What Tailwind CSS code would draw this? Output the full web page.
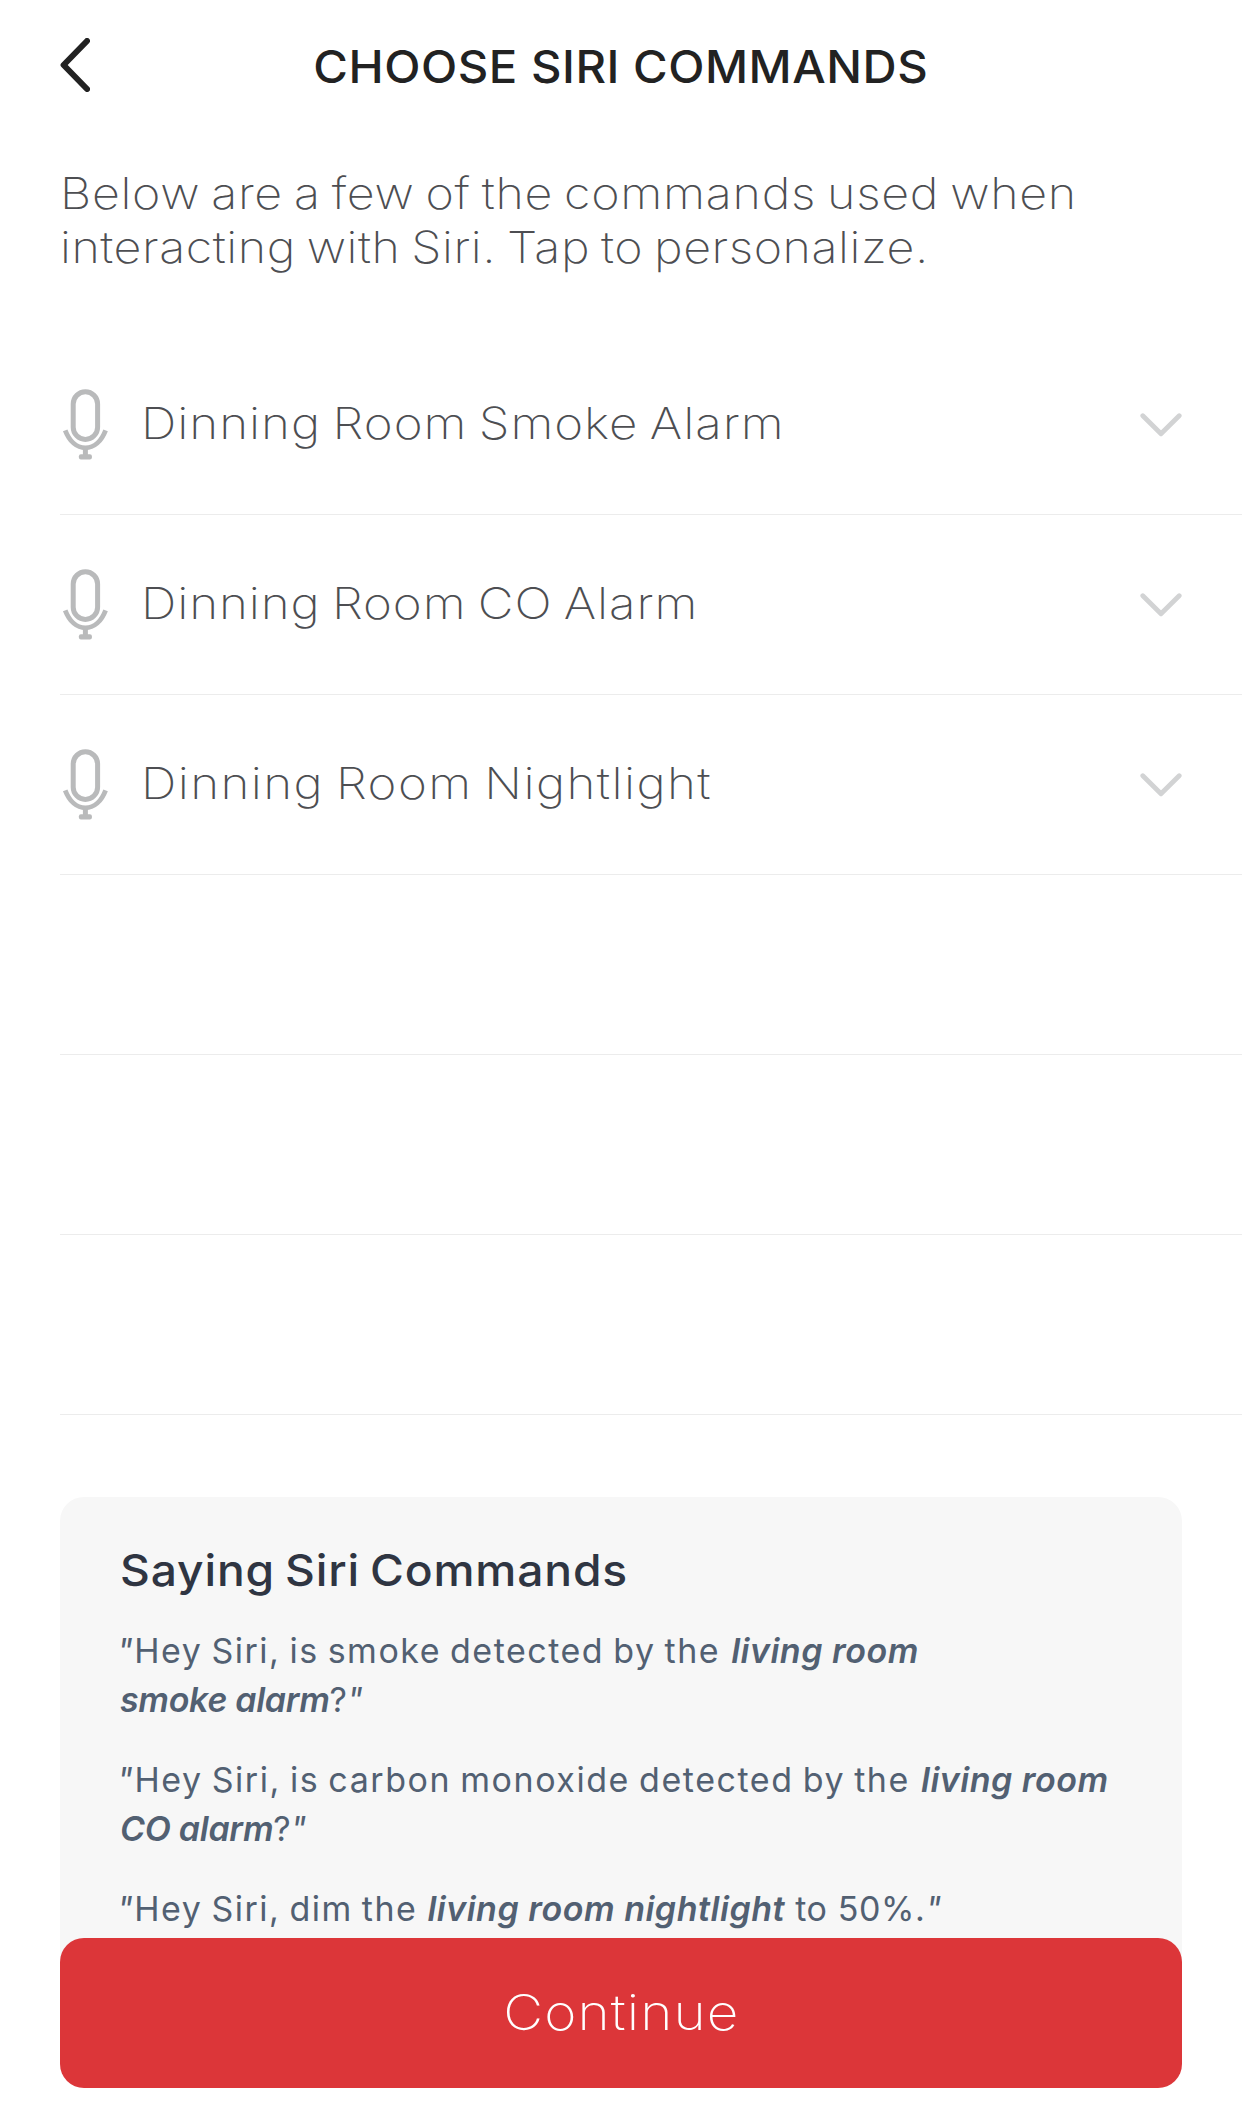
<!DOCTYPE html>
<html lang="en">
<head>
    <meta charset="UTF-8">
    <title>Choose Siri Commands</title>
    <meta name="viewport" content="width=device-width, initial-scale=1"/>
    <script src="https://cdn.jsdelivr.net/npm/@tailwindcss/browser@4"></script>
</head>
<body class="bg-white">
<!--Shared icons-->
<svg class="hidden">
    <symbol id="mic" viewBox="0 0 47 71">
        <rect x="11.2" y="2.8" width="24.4" height="47.6" rx="12.2" fill="none" stroke="currentColor" stroke-width="5"/>
        <path d="M3.2 41.3C7.5 52.5 15 58.8 23.4 58.8S39.3 52.5 43.6 41.3" fill="none" stroke="currentColor" stroke-width="4.8"/>
        <path d="M23.4 59v8" stroke="currentColor" stroke-width="5"/>
        <rect x="16.9" y="65.2" width="13" height="5.2" rx="2" fill="currentColor"/>
    </symbol>
    <symbol id="chevron" viewBox="0 0 42 24">
        <path d="M2.8 2.8L21 20.8L39.2 2.8" fill="none" stroke="currentColor" stroke-width="4.8" stroke-linecap="round" stroke-linejoin="round"/>
    </symbol>
</svg>
<div class="w-[1242px] h-[2125px] overflow-hidden flex flex-col font-['Inter',sans-serif]">
    <!--Header-->
    <header class="h-[133px] px-[60px] flex items-center justify-between shrink-0">
        <button aria-label="Back" class="w-[30px] h-[54px] -mt-[3px]">
            <svg class="w-[30px] h-[54px]" viewBox="0 0 30 54">
                <path d="M27 3L3.6 27L27 51" fill="none" stroke="#222222" stroke-width="6" stroke-linecap="round" stroke-linejoin="round"/>
            </svg>
        </button>
        <h1 class="scale-x-105 text-[45px] leading-[54px] font-[550] tracking-[0.5px] text-[#222222] whitespace-nowrap">CHOOSE SIRI COMMANDS</h1>
        <div class="w-[30px]"></div>
    </header>
    <!--Intro-->
    <p class="mt-[33px] h-[169px] pl-[60px] text-[44px] leading-[54px] font-extralight text-[#4d4e52] whitespace-nowrap shrink-0">
        <span class="block origin-left scale-x-110 tracking-[0.63px] [word-spacing:-3px]">Below are a few of the commands used when</span>
        <span class="block origin-left scale-x-110 tracking-[0.5px] [word-spacing:-3px]">interacting with Siri. Tap to personalize.</span>
    </p>
    <!--Command list-->
    <ul class="pl-[60px] shrink-0 text-[44px] font-extralight text-[#4d4e52] whitespace-nowrap">
        <li class="h-[180px] pl-[2px] pr-[60px] flex items-center border-b border-[#ececec]">
            <svg class="w-[47px] h-[71px] text-[#b9babb]"><use href="#mic"/></svg>
            <span class="ml-[32px] mb-[3px] grow origin-left scale-x-112 tracking-[0.87px] [word-spacing:-3px]">Dinning Room Smoke Alarm</span>
            <svg class="w-[42px] h-[24px] text-[#d2d3d4]"><use href="#chevron"/></svg>
        </li>
        <li class="h-[180px] pl-[2px] pr-[60px] flex items-center border-b border-[#ececec]">
            <svg class="w-[47px] h-[71px] text-[#b9babb]"><use href="#mic"/></svg>
            <span class="ml-[32px] mb-[3px] grow origin-left scale-x-112 tracking-[0.8px] [word-spacing:-3px]">Dinning Room CO Alarm</span>
            <svg class="w-[42px] h-[24px] text-[#d2d3d4]"><use href="#chevron"/></svg>
        </li>
        <li class="h-[180px] pl-[2px] pr-[60px] flex items-center border-b border-[#ececec]">
            <svg class="w-[47px] h-[71px] text-[#b9babb]"><use href="#mic"/></svg>
            <span class="ml-[32px] mb-[3px] grow origin-left scale-x-112 tracking-[1.25px] [word-spacing:-3px]">Dinning Room Nightlight</span>
            <svg class="w-[42px] h-[24px] text-[#d2d3d4]"><use href="#chevron"/></svg>
        </li>
        <li class="h-[180px] border-b border-[#ececec]"></li>
        <li class="h-[180px] border-b border-[#ececec]"></li>
        <li class="h-[180px] border-b border-[#ececec]"></li>
    </ul>
    <!--Examples-->
    <section class="mt-[82px] mx-[60px] h-[485px] pt-[46px] pl-[60px] rounded-t-[24px] bg-[#f7f7f7] shrink-0 whitespace-nowrap">
        <h2 class="origin-left scale-x-105 text-[44px] leading-[54px] font-medium tracking-[0.8px] [word-spacing:-3px] text-[#2f3542]">Saying Siri Commands</h2>
        <div class="mt-[29px] flex flex-col gap-[31px] text-[34px] leading-[49px] text-[#526072]">
            <p>
                <span class="tracking-[1.5px] [word-spacing:-2px]"><i class="-ml-[3px]">"</i>Hey Siri, is smoke detected by the </span><em class="ml-[2px] font-semibold tracking-[0.5px]">living room</em><br>
                <em class="font-semibold tracking-[-0.3px]">smoke alarm</em><span>?<i>"</i></span>
            </p>
            <p>
                <span class="tracking-[1.55px] [word-spacing:-2px]"><i class="-ml-[3px]">"</i>Hey Siri, is carbon monoxide detected by the </span><em class="ml-[2px] font-semibold tracking-[0.5px]">living room</em><br>
                <em class="font-semibold tracking-[-0.3px]">CO alarm</em><span>?<i>"</i></span>
            </p>
            <p>
                <span class="tracking-[1.5px] [word-spacing:-2px]"><i class="-ml-[3px]">"</i>Hey Siri, dim the </span><em class="ml-[1px] font-semibold tracking-[0.5px]">living room nightlight</em><span class="tracking-[0.6px]"> to 50%.<i>"</i></span>
            </p>
        </div>
    </section>
    <!--Continue button sits over the bottom of the examples-->
    <button class="-mt-[44px] mx-[60px] h-[150px] rounded-[24px] bg-[#dc3639] text-white text-[49px] font-extralight shrink-0">
        <span class="inline-block scale-x-112 tracking-[1px]">Continue</span>
    </button>
</div>
</body>
</html>
